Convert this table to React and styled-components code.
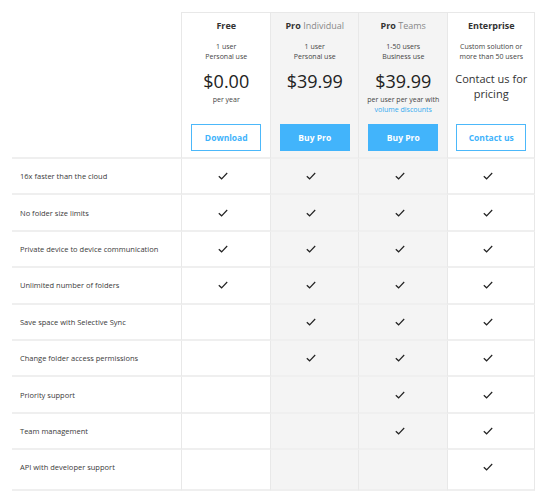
import React from 'react';
import styled, { createGlobalStyle } from 'styled-components';

const GlobalStyle = createGlobalStyle`
    body {
        margin: 0;
        background: #ffffff;
        font-family: "Open Sans", "Liberation Sans", sans-serif;
        color: #333333;
    }
`;

const plans = [
    {
        name: 'Free',
        lines: ['1 user', 'Personal use'],
        price: '$0.00',
        note: ['per year'],
        button: 'Download',
        solid: false,
    },
    {
        name: 'Pro',
        suffix: 'Individual',
        lines: ['1 user', 'Personal use'],
        price: '$39.99',
        note: [],
        button: 'Buy Pro',
        solid: true,
        shaded: true,
    },
    {
        name: 'Pro',
        suffix: 'Teams',
        lines: ['1-50 users', 'Business use'],
        price: '$39.99',
        note: ['per user per year with'],
        link: 'volume discounts',
        button: 'Buy Pro',
        solid: true,
        shaded: true,
    },
    {
        name: 'Enterprise',
        lines: ['Custom solution or', 'more than 50 users'],
        contact: ['Contact us for', 'pricing'],
        button: 'Contact us',
        solid: false,
    },
];

const features = [
    { label: '16x faster than the cloud', has: [1, 1, 1, 1] },
    { label: 'No folder size limits', has: [1, 1, 1, 1] },
    { label: 'Private device to device communication', has: [1, 1, 1, 1] },
    { label: 'Unlimited number of folders', has: [1, 1, 1, 1] },
    { label: 'Save space with Selective Sync', has: [0, 1, 1, 1] },
    { label: 'Change folder access permissions', has: [0, 1, 1, 1] },
    { label: 'Priority support', has: [0, 0, 1, 1] },
    { label: 'Team management', has: [0, 0, 1, 1] },
    { label: 'API with developer support', has: [0, 0, 0, 1] },
];

const Check = () => (
    <svg width="10" height="8" viewBox="0 0 10 8">
        <path d="M0.8 4.2 L3.6 6.8 L9.2 1" fill="none" stroke="#222" strokeWidth="1.2" />
    </svg>
);

const App = () => {
    return (
        <>
            <GlobalStyle />
            <Table>
                <Corner />
                {plans.map((plan, i) => (
                    <PlanHeader key={i} $shaded={plan.shaded} $last={i === plans.length - 1}>
                        <PlanName>
                            {plan.name}
                            {plan.suffix && <Suffix> {plan.suffix}</Suffix>}
                        </PlanName>
                        <Sub>
                            {plan.lines.map((l, j) => (
                                <div key={j}>{l}</div>
                            ))}
                        </Sub>
                        {plan.price && <Price>{plan.price}</Price>}
                        {plan.contact && (
                            <Contact>
                                {plan.contact.map((l, j) => (
                                    <div key={j}>{l}</div>
                                ))}
                            </Contact>
                        )}
                        {plan.note && plan.note.length > 0 && (
                            <Note>
                                {plan.note.map((l, j) => (
                                    <div key={j}>{l}</div>
                                ))}
                                {plan.link && <NoteLink>{plan.link}</NoteLink>}
                            </Note>
                        )}
                        <PlanButton $solid={plan.solid}>{plan.button}</PlanButton>
                    </PlanHeader>
                ))}

                {features.map((f, i) => (
                    <React.Fragment key={i}>
                        <FeatureCell $lastRow={i === features.length - 1}>{f.label}</FeatureCell>
                        {f.has.map((v, j) => (
                            <CheckCell
                                key={j}
                                $shaded={plans[j].shaded}
                                $last={j === f.has.length - 1}
                                $lastRow={i === features.length - 1}
                            >
                                {v ? <Check /> : null}
                            </CheckCell>
                        ))}
                    </React.Fragment>
                ))}
            </Table>
        </>
    );
};

const Table = styled.div`
    display: grid;
    grid-template-columns: 169px repeat(4, 88.5px);
    margin: 12px 0 0 12px;
    width: 523px;
`;

const Corner = styled.div`
    border-bottom: 2px solid #efefef;
`;

const PlanHeader = styled.div`
    height: 147px;
    box-sizing: border-box;
    display: flex;
    flex-direction: column;
    align-items: center;
    padding: 5px 0 6px 1px;
    background: ${p => (p.$shaded ? '#f4f4f4' : '#ffffff')};
    border-top: 1px solid #e8e8e8;
    border-left: 1px solid #e8e8e8;
    border-right: ${p => (p.$last ? '1px solid #e8e8e8' : 'none')};
    border-bottom: 2px solid #efefef;
    text-align: center;
    white-space: nowrap;
`;

const PlanName = styled.div`
    font-size: 9px;
    font-weight: 700;
    line-height: 16px;
    color: #333333;
`;

const Suffix = styled.span`
    font-weight: 400;
    color: #888888;
`;

const Sub = styled.div`
    margin-top: 8px;
    font-size: 7px;
    line-height: 10px;
    color: #444444;
`;

const Price = styled.div`
    margin-top: 6px;
    font-size: 18px;
    line-height: 26px;
    color: #222222;
`;

const Contact = styled.div`
    margin-top: 10px;
    font-size: 11px;
    line-height: 14.5px;
    color: #333333;
`;

const Note = styled.div`
    margin-top: 1px;
    font-size: 7px;
    line-height: 9.5px;
    color: #444444;
`;

const NoteLink = styled.div`
    color: #33aaf0;
`;

const PlanButton = styled.div`
    margin-top: auto;
    width: 70px;
    height: 27px;
    box-sizing: border-box;
    display: flex;
    align-items: center;
    justify-content: center;
    font-size: 8.5px;
    font-weight: 700;
    color: ${p => (p.$solid ? '#ffffff' : '#3fb3fb')};
    background: ${p => (p.$solid ? '#42b4fb' : '#ffffff')};
    border: ${p => (p.$solid ? 'none' : '1.5px solid #4cb8fa')};
`;

const FeatureCell = styled.div`
    height: ${p => (p.$lastRow ? '41px' : '36.4px')};
    box-sizing: border-box;
    display: flex;
    align-items: center;
    padding: ${p => (p.$lastRow ? '0 0 5px 8px' : '0 0 0 8px')};
    font-size: 7.5px;
    color: #3a3a3a;
    border-bottom: 2px solid #efefef;
`;

const CheckCell = styled.div`
    height: ${p => (p.$lastRow ? '41px' : '36.4px')};
    box-sizing: border-box;
    display: flex;
    align-items: center;
    justify-content: center;
    padding: ${p => (p.$lastRow ? '0 6px 5px 0' : '0 6px 0 0')};
    background: ${p => (p.$shaded ? '#f4f4f4' : '#ffffff')};
    border-left: 1px solid #e8e8e8;
    border-right: ${p => (p.$last ? '1px solid #e8e8e8' : 'none')};
    border-bottom: 2px solid #efefef;
`;

export default App;
